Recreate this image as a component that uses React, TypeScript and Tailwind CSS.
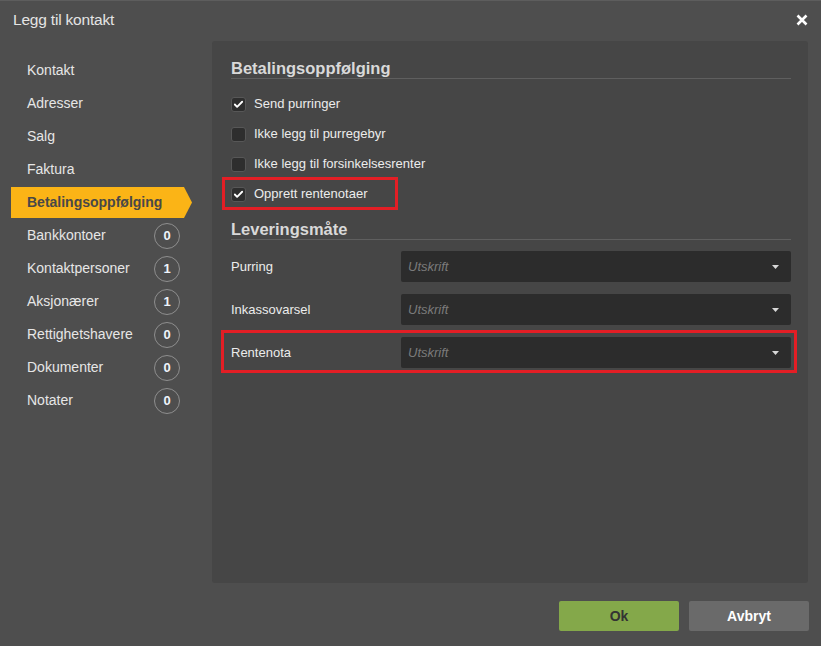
import { Check } from "lucide-react";

const menu = [
  { label: "Kontakt" },
  { label: "Adresser" },
  { label: "Salg" },
  { label: "Faktura" },
  { label: "Betalingsoppfølging", active: true },
  { label: "Bankkontoer", count: 0 },
  { label: "Kontaktpersoner", count: 1 },
  { label: "Aksjonærer", count: 1 },
  { label: "Rettighetshavere", count: 0 },
  { label: "Dokumenter", count: 0 },
  { label: "Notater", count: 0 },
];

const options = [
  { label: "Send purringer", checked: true },
  { label: "Ikke legg til purregebyr", checked: false },
  { label: "Ikke legg til forsinkelsesrenter", checked: false },
  { label: "Opprett rentenotaer", checked: true, marked: true },
];

const delivery = [
  { label: "Purring" },
  { label: "Inkassovarsel" },
  { label: "Rentenota", marked: true },
];

function Checkbox({ checked }: { checked: boolean }) {
  return (
    <span className="flex h-[15px] w-[15px] items-center justify-center rounded-[3px] border border-[#575757] bg-[#2e2e2e]">
      {checked && <Check className="h-[11px] w-[11px] text-white" strokeWidth={4} />}
    </span>
  );
}

function Select() {
  return (
    <div className="flex h-[31px] flex-1 items-center justify-between rounded-[2px] bg-[#2c2c2c] pl-[7px] pr-[12px]">
      <span className="text-[13px] italic text-[#7b7b7b]">Utskrift</span>
      <svg width="7" height="4" viewBox="0 0 7 4">
        <path d="M0 0h7L3.5 4z" fill="#d8d8d8" />
      </svg>
    </div>
  );
}

export default function App() {
  return (
    <div className="flex h-[646px] w-[821px] flex-col border-t border-[#5d5d5d] bg-[#4e4e4e] font-['Liberation_Sans',Arial,sans-serif]">
      {/* Title bar */}
      <div className="flex h-[40px] items-center justify-between pl-[13px] pr-[13px]">
        <span className="pb-[2px] text-[15.5px] tracking-[-0.2px] text-[#e4e4e4]">Legg til kontakt</span>
        <svg width="12" height="12" viewBox="0 0 12 12" className="mb-[2px]">
          <path d="M1.5 1.5l9 9M10.5 1.5l-9 9" stroke="#ffffff" strokeWidth="2.6" />
        </svg>
      </div>

      <div className="flex h-[542px]">
        {/* Sidebar */}
        <nav className="w-[212px] pt-[13px]">
          {menu.map((item) =>
            item.active ? (
              <div key={item.label} className="flex h-[33px] items-center pl-[11px]">
                <div className="flex h-[31px] w-[181px] items-center bg-[#fbb416] pl-[16px] text-[14px] font-bold text-[#484848] [clip-path:polygon(0_0,calc(100%-8px)_0,100%_50%,calc(100%-8px)_100%,0_100%)]">
                  {item.label}
                </div>
              </div>
            ) : (
              <div key={item.label} className="flex h-[33px] items-center justify-between pl-[27px] pr-[32px] text-[14px] text-[#e6e6e6]">
                <span>{item.label}</span>
                {item.count !== undefined && (
                  <span className="flex h-[26px] w-[26px] items-center justify-center rounded-full border border-[#8e8e8e] text-[13px] font-bold text-[#eef4fb]">
                    {item.count}
                  </span>
                )}
              </div>
            )
          )}
        </nav>

        {/* Content panel */}
        <section className="mr-[13px] flex-1 rounded-[3px] bg-[#464646] pl-[19px] pr-[17px] pt-[17px]">
          <h2 className="h-[21px] border-b border-[#5f5f5f] text-[16.5px] font-bold leading-[20px] text-[#d9d9d9]">
            Betalingsoppfølging
          </h2>
          <div className="mt-[10px]">
            {options.map((o) => (
              <div key={o.label} className="relative flex h-[30px] items-center gap-[8px] text-[13px] text-[#ececec]">
                <Checkbox checked={o.checked} />
                <span>{o.label}</span>
                {o.marked && (
                  <span className="pointer-events-none absolute -left-[9px] -top-[2px] h-[33px] w-[176px] border-[3px] border-[#e31e25]" />
                )}
              </div>
            ))}
          </div>

          <h2 className="mt-[10px] h-[21px] border-b border-[#5f5f5f] text-[16.5px] font-bold leading-[20px] text-[#d9d9d9]">
            Leveringsmåte
          </h2>
          <div className="mt-[11px] flex flex-col gap-[12px]">
            {delivery.map((d) => (
              <div key={d.label} className="relative flex items-center">
                <span className="w-[170px] text-[13px] text-[#ececec]">{d.label}</span>
                <Select />
                {d.marked && (
                  <span className="pointer-events-none absolute -bottom-[5px] -left-[10px] -right-[6px] -top-[7px] border-[3px] border-[#e31e25]" />
                )}
              </div>
            ))}
          </div>
        </section>
      </div>

      {/* Footer buttons */}
      <div className="flex justify-end gap-[10px] pr-[12px] pt-[18px]">
        <button className="h-[30px] w-[120px] rounded-[2px] bg-[#84a84a] text-[14px] font-bold text-[#333333]">Ok</button>
        <button className="h-[30px] w-[120px] rounded-[2px] bg-[#6a6a6a] text-[14px] font-bold text-white">Avbryt</button>
      </div>
    </div>
  );
}
